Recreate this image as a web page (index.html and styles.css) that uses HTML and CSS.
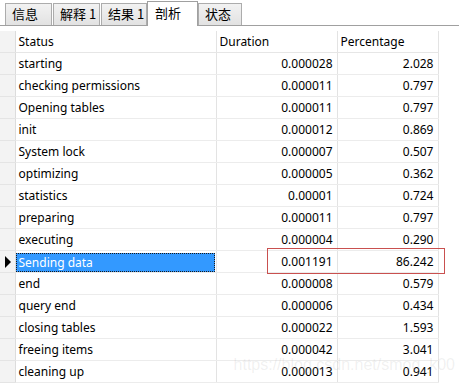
FILE: index.html
```html
<!DOCTYPE html>
<html lang="zh-CN">
<head>
<meta charset="UTF-8" />
<title>剖析</title>
<link rel="stylesheet" href="styles.css">
</head>
<body>

<div class="tabs">
  <div class="tab w47">信息</div>
  <div class="tab w47">解释 1</div>
  <div class="tab w46">结果 1</div>
  <div class="tab active">剖析</div>
  <div class="tab w44">状态</div>
</div>

<div class="grid-wrap">
  <table class="grid">
    <colgroup>
      <col class="c-head"><col class="c-status"><col class="c-dur"><col class="c-pct">
    </colgroup>
    <thead>
      <tr><th class="rh"></th><th>Status</th><th>Duration</th><th>Percentage</th></tr>
    </thead>
    <tbody>
      <tr><td class="rh"></td><td>starting</td><td class="num">0.000028</td><td class="num">2.028</td></tr>
      <tr><td class="rh"></td><td>checking permissions</td><td class="num">0.000011</td><td class="num">0.797</td></tr>
      <tr><td class="rh"></td><td>Opening tables</td><td class="num">0.000011</td><td class="num">0.797</td></tr>
      <tr><td class="rh"></td><td>init</td><td class="num">0.000012</td><td class="num">0.869</td></tr>
      <tr><td class="rh"></td><td>System lock</td><td class="num">0.000007</td><td class="num">0.507</td></tr>
      <tr><td class="rh"></td><td>optimizing</td><td class="num">0.000005</td><td class="num">0.362</td></tr>
      <tr><td class="rh"></td><td>statistics</td><td class="num">0.00001</td><td class="num">0.724</td></tr>
      <tr><td class="rh"></td><td>preparing</td><td class="num">0.000011</td><td class="num">0.797</td></tr>
      <tr><td class="rh"></td><td>executing</td><td class="num">0.000004</td><td class="num">0.290</td></tr>
      <tr class="current"><td class="rh"><span class="arrow"></span></td><td class="sel"><span class="focus">Sending data</span></td><td class="num">0.001191</td><td class="num">86.242</td></tr>
      <tr><td class="rh"></td><td>end</td><td class="num">0.000008</td><td class="num">0.579</td></tr>
      <tr><td class="rh"></td><td>query end</td><td class="num">0.000006</td><td class="num">0.434</td></tr>
      <tr><td class="rh"></td><td>closing tables</td><td class="num">0.000022</td><td class="num">1.593</td></tr>
      <tr><td class="rh"></td><td>freeing items</td><td class="num">0.000042</td><td class="num">3.041</td></tr>
      <tr><td class="rh"></td><td>cleaning up</td><td class="num">0.000013</td><td class="num">0.941</td></tr>
    </tbody>
  </table>
  <!-- 标注框 -->
  <div class="mark"></div>
  <div class="watermark">https://blog.csdn.net/smog_k00</div>
</div>

</body>
</html>
```

FILE: styles.css
```css
body {
  margin: 0; background: #fff;
  font-family: "Noto Sans", "Noto Sans CJK SC", sans-serif;
  font-size: 12px; color: #000;
  overflow: hidden;
}

/* 标签页 */
.tabs {
  display: flex; gap: 1px;
  height: 25px; padding-left: 5px;
  border-bottom: 1px solid #a0a0a0;
}
.tab {
  box-sizing: border-box;
  margin-top: 3px; height: 22px;
  border: 1px solid #acacac; border-bottom: none;
  background: linear-gradient(#f2f2f2, #e2e2e2);
  font-family: "Noto Sans CJK SC", sans-serif; font-size: 13px;
  line-height: 20px; padding-left: 6px;
}
.w47 { width: 47px; }
.w46 { width: 46px; }
.w44 { width: 44px; }
.tab.active {
  width: 51px; margin-top: 1px; height: 25px; margin-bottom: -1px;
  margin-left: -1px; margin-right: -1px;
  background: #fff; border-color: #a0a0a0;
  padding-left: 7px; line-height: 21px;
}

/* 表格 */
.grid-wrap {
  position: relative; margin-top: 5px;
}
.grid {
  border-collapse: collapse; table-layout: fixed;
  width: 438px;
}
.c-head { width: 15px; }
.c-status { width: 201px; }
.c-dur { width: 121px; }
.c-pct { width: 101px; }

.grid th, .grid td {
  height: 21px; padding: 0 4px 0 3px;
  border-right: 1px solid #e3e3e3;
  border-bottom: 1px solid #ececec;
  white-space: nowrap; overflow: hidden;
  font-weight: normal; text-align: left;
  line-height: 20px;
}
.grid th { border-bottom-color: #e6e6e6; }
.grid .rh {
  background: #f3f3f3; padding: 0;
  border-right-color: #dcdcdc; border-bottom-color: #e4e4e4;
}
.grid .num { text-align: right; }

.grid td.sel { padding: 0; }
.focus {
  display: block; margin: 1px 1px 0 0; height: 19px;
  background: #3399ff; color: #fff;
  outline: 1px dotted #1a1a1a; outline-offset: -1px;
  padding-left: 3px; line-height: 19px;
}
.arrow {
  display: block; width: 0; height: 0; margin-left: 5px;
  border-top: 6px solid transparent; border-bottom: 6px solid transparent;
  border-left: 6px solid #000;
}

.mark {
  position: absolute; left: 267px; top: 217px;
  width: 176px; height: 24px;
  border: 1px solid #c9504f;
}
.watermark {
  position: absolute; right: 4px; top: 325px;
  font-family: "Liberation Sans", sans-serif; font-size: 16px;
  color: rgba(150, 150, 150, 0.14);
  white-space: nowrap;
}
```
